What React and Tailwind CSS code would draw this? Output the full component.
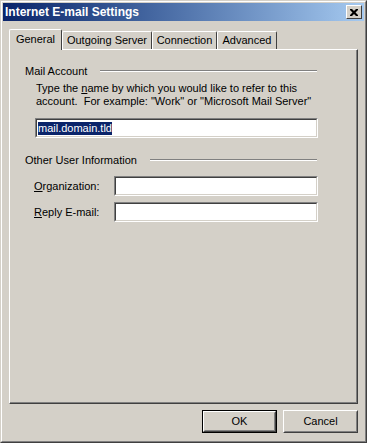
import React from "react";

const font = { fontFamily: '"Liberation Sans", Arial, sans-serif' };

function Sunken({ className = "", children }) {
  return (
    <div
      className={`bg-white h-[20px] border border-t-[#808080] border-l-[#808080] border-b-white border-r-white ${className}`}
    >
      <div className="h-full border border-t-[#404040] border-l-[#404040] border-b-[#d4d0c8] border-r-[#d4d0c8] flex items-center px-[1px]">
        {children}
      </div>
    </div>
  );
}

function GroupTitle({ label, lineLeft }) {
  return (
    <div className="flex items-center h-[14px]">
      <span className="text-[11px] text-black">{label}</span>
      <div className={`flex-1 ${lineLeft} mr-[39px] border-t border-t-[#808080] border-b border-b-white`} />
    </div>
  );
}

function Tab({ label, selected, width }) {
  if (selected) {
    return (
      <div
        className={`${width} h-[21px] -mb-[1px] z-10 relative bg-[#d4d0c8] border-l border-t border-l-white border-t-white border-r border-r-[#404040] rounded-t-[2px] flex items-center justify-center pb-[2px]`}
      >
        <span className="text-[11px] text-black">{label}</span>
      </div>
    );
  }
  return (
    <div
      className={`${width} h-[18px] bg-[#d4d0c8] border-l border-t border-l-white border-t-white border-r border-r-[#404040] rounded-t-[2px] flex items-center justify-center`}
    >
      <span className="text-[11px] text-black">{label}</span>
    </div>
  );
}

function Button({ label, isDefault }) {
  return (
    <div
      className={`w-[75px] h-[23px] ${isDefault ? "border border-black" : ""}`}
    >
      <div className="h-full border border-t-white border-l-white border-b-[#404040] border-r-[#404040]">
        <div className="h-full border border-t-[#d4d0c8] border-l-[#d4d0c8] border-b-[#808080] border-r-[#808080] flex items-center justify-center">
          <span className="text-[11px] text-black">{label}</span>
        </div>
      </div>
    </div>
  );
}

export default function App() {
  return (
    <div className="w-[367px] h-[443px] bg-[#d4d0c8] select-none" style={font}>
      {/* window frame */}
      <div className="w-full h-full border border-t-[#d4d0c8] border-l-[#d4d0c8] border-b-[#404040] border-r-[#404040]">
        <div className="w-full h-full border border-t-white border-l-white border-b-[#808080] border-r-[#808080] p-[1px] flex flex-col">
          {/* title bar */}
          <div className="h-[18px] bg-linear-to-r from-[#0a246a] to-[#a6caf0] flex items-center pl-[2px] pr-[2px]">
            <span className="text-[12px] font-bold text-white flex-1 leading-none">Internet E-mail Settings</span>
            <div className="w-[16px] h-[14px] bg-[#d4d0c8] border border-t-white border-l-white border-b-[#404040] border-r-[#404040] flex items-center justify-center">
              <svg width="8" height="7" viewBox="0 0 8 7">
                <path d="M0 0h2l2 2 2-2h2v1l-2.5 2.5 2.5 2.5v1h-2l-2-2-2 2h-2v-1l2.5-2.5-2.5-2.5z" fill="black" />
              </svg>
            </div>
          </div>

          {/* body */}
          <div className="flex-1 flex flex-col px-[6px] pt-[8px]">
            {/* tabs */}
            <div className="flex items-end h-[20px] pl-0">
              <Tab label="General" selected width="w-[53px]" />
              <Tab label="Outgoing Server" width="w-[90px]" />
              <Tab label="Connection" width="w-[65px]" />
              <Tab label="Advanced" width="w-[60px]" />
            </div>

            {/* panel */}
            <div className="h-[355px] border-l border-t border-l-white border-t-white border-r border-b border-r-[#404040] border-b-[#404040]">
              <div className="h-full border-r border-b border-r-[#808080] border-b-[#808080] pl-[15px] pt-[14px]">
                <GroupTitle label="Mail Account" lineLeft="ml-[13px]" />
                <div className="pl-[11px] pt-[4px] text-[11px] leading-[13px] text-black">
                  <div>
                    Type the <u>n</u>ame by which you would like to refer to this
                  </div>
                  <div>account.&nbsp; For example: "Work" or "Microsoft Mail Server"</div>
                </div>
                <div className="pl-[10px] pt-[10px] pr-[38px]">
                  <Sunken>
                    <span className="text-[11px] bg-[#0a246a] text-white leading-[13px]">mail.domain.tld</span>
                  </Sunken>
                </div>

                <div className="pt-[15px]">
                  <GroupTitle label="Other User Information" lineLeft="ml-[13px]" />
                </div>
                <div className="pl-[9px] pt-[9px] pr-[38px] flex flex-col gap-[6px]">
                  <div className="flex items-center">
                    <span className="w-[80px] text-[11px] text-black">
                      <u>O</u>rganization:
                    </span>
                    <Sunken className="flex-1" />
                  </div>
                  <div className="flex items-center">
                    <span className="w-[80px] text-[11px] text-black">
                      <u>R</u>eply E-mail:
                    </span>
                    <Sunken className="flex-1" />
                  </div>
                </div>
              </div>
            </div>

            {/* buttons */}
            <div className="flex justify-end gap-[6px] pt-[6px]">
              <Button label="OK" isDefault />
              <Button label="Cancel" />
            </div>
          </div>
        </div>
      </div>
    </div>
  );
}
